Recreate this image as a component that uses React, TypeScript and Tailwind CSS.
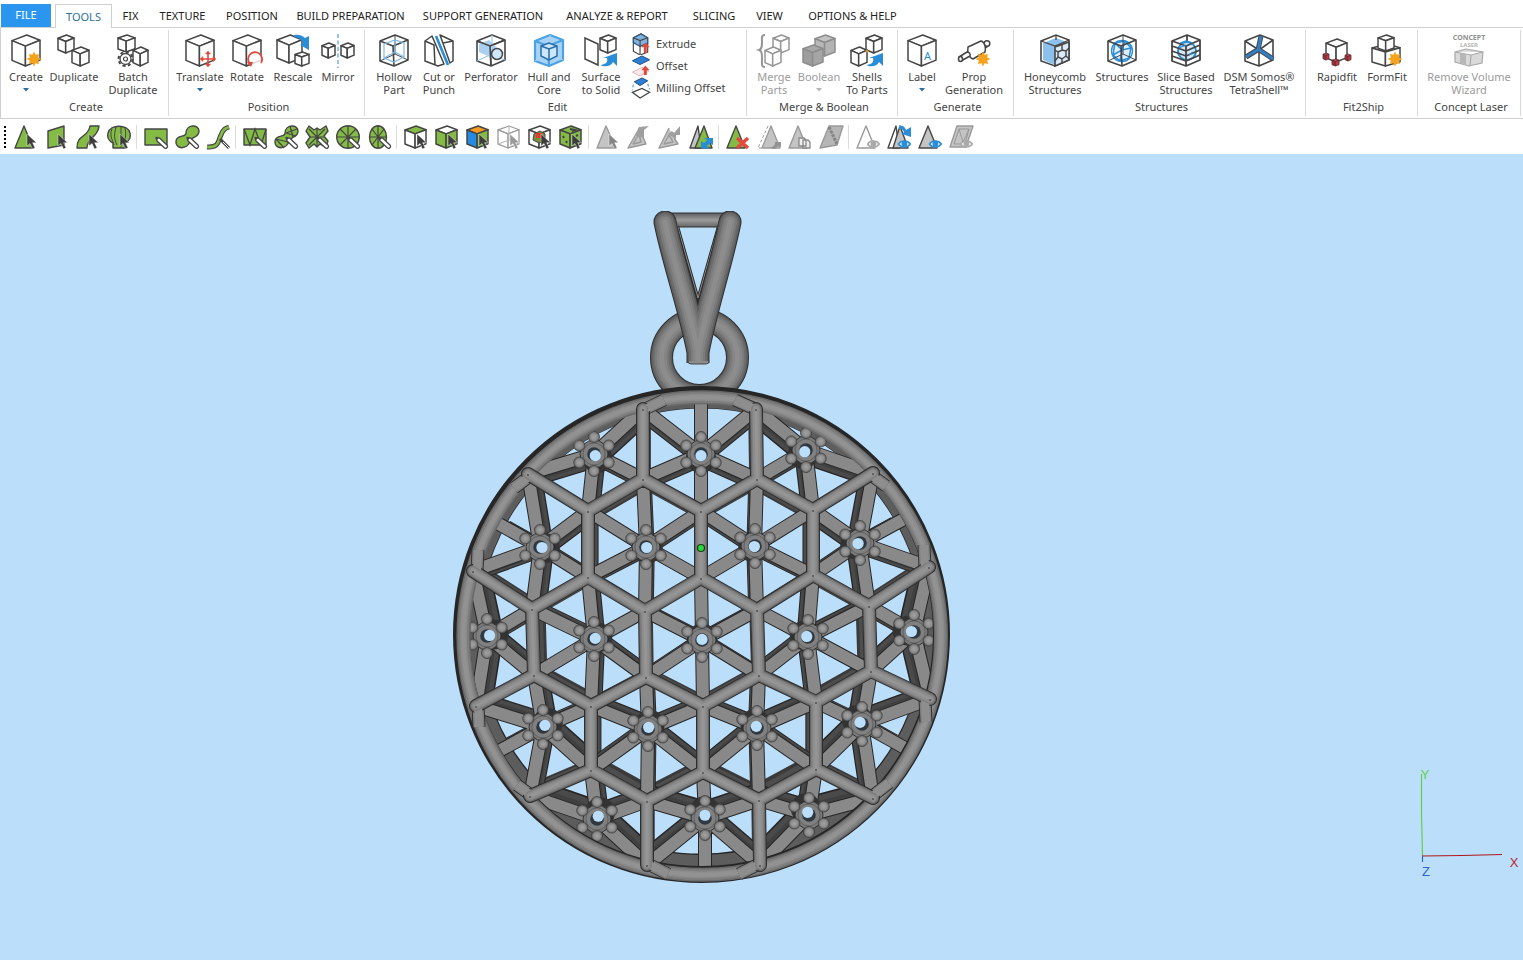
import { ReactNode, useState } from "react";

const INK = "#454545";
const GREEN = "#83bb45";
const BLUE = "#2a8dd8";
const GRAY = "#969696";
const SKY = "#bbdefa";

// ---------- shared icon parts ----------

interface CubeProps {
  x?: number;
  y?: number;
  w?: number;
  h?: number;
  top?: string;
  left?: string;
  right?: string;
  stroke?: string;
  sw?: number;
}

function Cube({ x = 3, y = 1, w = 28, h = 31, top = "#fff", left = "#fff", right = "#fff", stroke = INK, sw = 1.5 }: CubeProps) {
  const L = `${x},${y + h * 0.18}`;
  const T = `${x + w * 0.53},${y}`;
  const R = `${x + w},${y + h * 0.17}`;
  const F = `${x + w * 0.48},${y + h * 0.36}`;
  const LB = `${x},${y + h * 0.82}`;
  const FB = `${x + w * 0.48},${y + h}`;
  const RB = `${x + w},${y + h * 0.81}`;
  return (
    <g stroke={stroke} strokeWidth={sw} strokeLinejoin="round">
      <polygon points={`${L} ${T} ${R} ${F}`} fill={top} />
      <polygon points={`${L} ${F} ${FB} ${LB}`} fill={left} />
      <polygon points={`${F} ${R} ${RB} ${FB}`} fill={right} />
    </g>
  );
}

// Cube drawn as a see-through frame
function WireCube({ fill = "none", stroke = INK, sw = 1.6, inner = INK }: { fill?: string; stroke?: string; sw?: number; inner?: string }) {
  return (
    <g fill="none" stroke={stroke} strokeWidth={sw} strokeLinejoin="round">
      <path d="M3 7 18 1 31 6V26L17 32 3 27Z" fill={fill} />
      <path d="M3 7 16 12 31 6M16 12 17 32" />
      <path d="M18 1V20M18 20 3 27M18 20 31 26" stroke={inner} strokeWidth={1} />
    </g>
  );
}

function Star({ x, y }: { x: number; y: number }) {
  return (
    <path
      transform={`translate(${x} ${y})`}
      fill="#f5a31c"
      d="M0-7.500 1.600-4.200 5-5 4.200-1.600 7.500 0 4.200 1.600 5 5 1.600 4.200 0 7.500-1.600 4.200-5 5-4.200 1.600-7.500 0-4.200-1.600-5-5-1.600-4.200Z"
    />
  );
}

function Cursor({ color = "#3d3d3d" }: { color?: string }) {
  return <path d="M12 9.500V21.500L15 19 17.500 24.500 20 23.300 17.600 18.200H21.500Z" transform="translate(1 -.5)" fill={color} stroke="#fff" strokeWidth=".4" />;
}

function Pen() {
  return (
    <g>
      <path d="M12 12.500 13 16 20.500 23C22 24 24.500 22 23.200 20.300L15.800 13.200Z" fill="#fff" stroke={INK} strokeWidth="1.300" strokeLinejoin="round" />
      <path d="M12 12.500 12.800 15.200 14.800 13.200Z" fill={INK} />
    </g>
  );
}

function Eye({ color = BLUE }: { color?: string }) {
  return (
    <g fill="#fff" stroke={color} strokeWidth="1.500">
      <path d="M11.500 19C14 15 20.500 15 23.300 19 20.500 23 14 23 11.500 19Z" />
      <circle cx="17.400" cy="18.800" r="2.200" fill={color} />
    </g>
  );
}

function BlueArrow({ x = 0, y = 0 }: { x?: number; y?: number }) {
  return <path transform={`translate(${x} ${y})`} d="M0 12C5 11 7 9 6 5L2 5 16 0V13L12 9C10 13 6 14 1 13Z" fill={BLUE} />;
}

// ---------- ribbon icons (34 x 34) ----------

const bigIcons: Record<string, ReactNode> = {
  create: (
    <>
      <Cube />
      <Star x={25} y={25} />
    </>
  ),
  duplicate: (
    <>
      <Cube x={1} y={1} w={16} h={18} />
      <Cube x={15} y={13} w={17} h={19} />
    </>
  ),
  batch: (
    <>
      <Cube x={2} y={1} w={17} h={17} />
      <Cube x={17} y={13} w={15} h={19} />
      <circle cx="9.500" cy="25" r="7" fill="#fff" stroke={INK} strokeWidth="2" strokeDasharray="3 2.500" />
      <circle cx="9.500" cy="25" r="5.500" fill="#fff" stroke={INK} strokeWidth="1.300" />
      <circle cx="9.500" cy="25" r="2" fill="#fff" stroke={INK} strokeWidth="1.200" />
    </>
  ),
  translate: (
    <>
      <Cube />
      <g stroke="#e0483c" strokeWidth="1.600" fill="#e0483c">
        <path d="M25 18V32M18 25H32" />
        <path strokeWidth=".5" d="M25 17 27.500 20H22.500ZM25 33 27.500 30H22.500ZM17 25 20 22.500V27.500ZM33 25 30 22.500V27.500Z" />
      </g>
    </>
  ),
  rotate: (
    <>
      <Cube />
      <circle cx="25" cy="25" r="7" fill="#fff" fillOpacity=".8" />
      <path d="M31 29A7 7 0 1 0 20 30" fill="none" stroke="#e0483c" strokeWidth="1.800" />
      <path d="M17 28 23 28 21 33Z" fill="#e0483c" />
    </>
  ),
  rescale: (
    <>
      <Cube x={1} y={1} w={25} h={28} />
      <path d="M18 1C23 0 27 2 29 4L33 2V16L24 11 27 9C25 5 22 3 18 3Z" fill={BLUE} />
      <Cube x={19} y={18} w={14} h={14} />
    </>
  ),
  mirror: (
    <>
      <Cube x={1} y={9} w={13} h={15} />
      <Cube x={20} y={9} w={13} h={15} />
      <path d="M17 0V34" stroke="#5aa7dc" strokeWidth="1.300" strokeDasharray="4 2.500" />
    </>
  ),
  hollow: (
    <>
      <WireCube />
      <path d="M7 10 18 6 27 9V23L17 28 7 24ZM18 6V18L7 24M18 18 27 23" fill="none" stroke="#7fb9e4" strokeWidth="1.200" />
    </>
  ),
  cut: (
    <>
      <path d="M3 7 10 2 22 30 16 32 3 27ZM3 7 12 11 13 31" fill="#fff" stroke={INK} strokeWidth="1.500" strokeLinejoin="round" />
      <path d="M18 1 31 7V27L28 29Z" fill="#fff" stroke={INK} strokeWidth="1.500" strokeLinejoin="round" />
      <path d="M21 9 31 7" stroke={INK} strokeWidth="1.500" />
      <path d="M14 2 26 31" stroke={BLUE} strokeWidth="2.600" />
    </>
  ),
  perforator: (
    <>
      <WireCube inner="#8fc4ec" />
      <path d="M5 10 15 6 24 15 24 26 18 24 5 18Z" fill="#a9d0f1" />
      <path d="M3 7 16 12 31 6M16 12 17 32" fill="none" stroke={INK} strokeWidth="1.600" />
      <circle cx="23" cy="20" r="5.500" fill="#cfe5f8" stroke={INK} strokeWidth="1.500" />
    </>
  ),
  hull: (
    <>
      <WireCube fill="#a8d3f5" stroke="#4ba3e3" sw={2.2} inner="#a8d3f5" />
      <path d="M9 12 17 9 25 12V22L17 26 9 22Z" fill="#cce6fb" stroke="#286ea8" strokeWidth="1.500" />
      <path d="M9 12 17 15 25 12M17 15V26" fill="none" stroke="#286ea8" strokeWidth="1.500" />
    </>
  ),
  surface: (
    <>
      <path d="M1 4 14 10V31L1 25Z" fill="#fff" stroke={INK} strokeWidth="1.500" />
      <Cube x={16} y={1} w={16} h={18} />
      <BlueArrow x={17} y={19} />
    </>
  ),
  merge: (
    <>
      <path d="M8 1C4 1 5 4 5 8S5 15 2 16C5 17 5 20 5 25S4 33 8 33" fill="none" stroke={GRAY} strokeWidth="2" />
      <Cube x={16} y={1} w={16} h={18} stroke={GRAY} />
      <Cube x={8} y={13} w={16} h={19} stroke={GRAY} />
    </>
  ),
  boolean: (
    <>
      <Cube x={13} y={1} w={20} h={21} stroke="#8d8d8d" top="#c2c2c2" left="#b9b9b9" right="#b3b3b3" />
      <Cube x={1} y={11} w={20} h={21} stroke="#8d8d8d" top="#a8a8a8" left="#9d9d9d" right="#a5a5a5" />
    </>
  ),
  shells: (
    <>
      <Cube x={16} y={1} w={16} h={18} />
      <Cube x={1} y={13} w={16} h={19} />
      <circle cx="17" cy="17" r="1.300" fill="#e8952c" />
      <BlueArrow x={17} y={19} />
    </>
  ),
  label: (
    <>
      <Cube />
      <text x="19" y="26" fontSize="11" fill={BLUE} fontFamily="Noto Sans, sans-serif">
        A
      </text>
    </>
  ),
  prop: (
    <>
      <g fill="#fff" stroke={INK} strokeWidth="1.500" strokeLinejoin="round">
        <path d="M25 10 29 8 30 13 27 14" />
        <circle cx="30" cy="9.500" r="2.800" />
        <path d="M11 13 24 7C28 8 29 14 28 18L16 25C12 24 10 18 11 13Z" />
        <path d="M2 23 10 18A3 3 0 0 1 13 22L4 27Z" />
        <ellipse cx="3.500" cy="25" rx="2" ry="2.500" />
      </g>
      <Star x={26} y={25} />
    </>
  ),
  honeycomb: (
    <>
      <path d="M3 7 18 1 31 6V26L17 32 3 27Z" fill="#fff" stroke={INK} strokeWidth="1.600" />
      <path d="M5 9 18 4 29 8 17 13V31L5 26Z" fill="#8cc1ee" />
      <path d="M17 13 31 8V26L17 32Z" fill="#dcebf7" stroke={INK} strokeWidth="1.600" />
      <path d="M24 16 28 17 28 22 24 25 20 23V18ZM24 16V10M28 17 31 14M28 22 31 25M24 25V30M20 23 17 27M20 18 17 16" fill="none" stroke={INK} strokeWidth="1.400" />
      <path d="M3 7 17 12 31 6M18 1V6" fill="none" stroke={INK} strokeWidth="1.300" />
    </>
  ),
  structures: (
    <>
      <circle cx="17" cy="17" r="10.500" fill="#dff0fc" stroke={BLUE} strokeWidth="1.300" />
      <path d="M10 9 20 7 26 14 24 24 15 27 8 21ZM10 9 17 16 26 14M17 16 15 27M8 21 17 16 20 7" fill="none" stroke={BLUE} strokeWidth="1.500" />
      <WireCube />
    </>
  ),
  slice: (
    <>
      <circle cx="18" cy="17" r="9" fill="#d5eafa" stroke={BLUE} strokeWidth="2" />
      <g fill="none" stroke={INK} strokeWidth="1.800" strokeLinejoin="round">
        <path d="M3 7 18 1 31 6 17 12ZM3 7V27L17 32 31 26V6M17 12V32M18 1V7" />
        <path d="M3 12 17 17 31 11M3 17 17 22 31 16M3 22 17 27 31 21" />
      </g>
      <path d="M11 9 17 7 24 9M10 14 17 11M24 18 20 21" stroke={BLUE} strokeWidth="1.300" fill="none" />
    </>
  ),
  dsm: (
    <>
      <path d="M3 7 18 1 31 6V26L17 32 3 27ZM3 7 17 16 31 6M17 16V32" fill="none" stroke={INK} strokeWidth="1.600" strokeLinejoin="round" />
      <path d="M19 2 16 16M17 15 4 23M16 15 31 25" stroke={INK} strokeWidth="5" />
      <path d="M19 2 16 17M17 15 4 23M16 15 31 25" stroke="#347fc2" strokeWidth="3.200" />
    </>
  ),
  rapidfit: (
    <>
      <Cube x={6} y={5} w={21} h={23} />
      <g>
        <Cube x={3} y={19} w={6} h={7} top="#d7525a" left="#a6313a" right="#c13b45" stroke="#5b2a2d" sw={0.8} />
        <Cube x={25} y={20} w={6} h={7} top="#d7525a" left="#a6313a" right="#c13b45" stroke="#5b2a2d" sw={0.8} />
        <Cube x={12} y={25} w={7} h={7} top="#d7525a" left="#a6313a" right="#c13b45" stroke="#5b2a2d" sw={0.8} />
      </g>
    </>
  ),
  formfit: (
    <>
      <Cube x={2} y={10} w={28} h={22} />
      <Cube x={8} y={1} w={16} h={16} />
      <Star x={25} y={25} />
    </>
  ),
  concept: (
    <>
      <g fontFamily="Noto Sans, sans-serif" fontWeight="700" textAnchor="middle">
        <text x="17" y="6" fontSize="7" fill="#8f8f8f">
          CONCEPT
        </text>
        <text x="17" y="13" fontSize="6" fill="#b5b5b5">
          LASER
        </text>
      </g>
      <path d="M3 18 14 15 31 18 30 29 17 32 3 28ZM3 18 19 21 31 18M19 21 18 32" fill="#dadada" stroke="#a8a8a8" strokeWidth="1.200" />
      <path d="M8 19 14 20V31L8 29Z" fill="#b7b7b7" />
    </>
  ),
};

const smallIcons: Record<string, ReactNode> = {
  extrude: (
    <>
      <path d="M2 5 10 1 17 5V20L9 23 2 19Z" fill="#fff" stroke={INK} strokeWidth="1.200" />
      <path d="M2 5 10 1 17 5V11L9 14 2 10Z" fill="#7fb2de" stroke="#2b5279" strokeWidth="1.200" />
      <path d="M2 5 9 8 17 5M9 8V22" fill="none" stroke={INK} strokeWidth="1.200" />
      <path d="M13 21H16V15H19L14.500 10 10.500 15H13Z" fill="#e0483c" />
    </>
  ),
  offset: (
    <>
      <path d="M1 6 11 1 19 5 9 10Z" fill="#2c7fd3" stroke="#1c4b80" strokeWidth="1" />
      <path d="M1 18 11 13 18 17 9 22Z" fill="#fbe9ea" stroke="#dcb1b5" strokeWidth="1" />
      <path d="M13 21H16V16H19L14.500 11 10.500 16H13Z" fill="#e0483c" />
    </>
  ),
  milling: (
    <>
      <path d="M3 5 11 1 17 4 9 9Z" fill="#2c7fd3" stroke="#1c4b80" strokeWidth="1" />
      <path d="M1 16 11 12 19 16 9 22Z" fill="#fff" stroke={INK} strokeWidth="1.300" />
      <path d="M2 8 1 14M17 7 19 13" stroke="#6eb0e2" strokeWidth="1.500" strokeDasharray="3 2" />
    </>
  ),
};

// ---------- marking toolbar icons (24 x 24) ----------

const g = { fill: GREEN, stroke: INK, strokeWidth: 1.4, strokeLinejoin: "round" as const };
const d = { fill: "#c4c4c4", stroke: "#9a9a9a", strokeWidth: 1.4, strokeLinejoin: "round" as const };
const FAN = "M12 1V23M1 12H23M4 4 20 20M20 4 4 20";

const markIcons: Record<string, ReactNode> = {
  "Mark triangle": (
    <>
      <path {...g} d="M10 1 1 23H19Z" />
      <Cursor />
    </>
  ),
  "Mark plane": (
    <>
      <path {...g} d="M3 6 19 1V20L3 23Z" />
      <Cursor />
    </>
  ),
  "Mark surface": (
    <>
      <path {...g} d="M1 23C1 9 12 13 14 1H23C22 13 11 12 11 23Z" />
      <Cursor />
    </>
  ),
  "Mark shell": (
    <>
      <path {...g} d="M6 23H18V18C22 16 24 12 23 8 21-1 3-1 1 8 0 12 2 16 6 18Z" />
      <path d="M9 2C7 10 7 14 10 20M14 1V22M5 4C2 11 6 16 7 20M18 3C20 11 17 16 17 20" fill="none" stroke={INK} />
      <Cursor />
    </>
  ),
  "Rectangle selection": (
    <>
      <path {...g} d="M1 4H23V20H1Z" />
      <Pen />
    </>
  ),
  "Free form selection": (
    <>
      <path {...g} d="M11 8C11-1 24-1 24 6 24 13 17 11 15 16 13 25 0 25 1 16 2 9 11 13 11 8Z" />
      <Pen />
    </>
  ),
  "Brush selection": (
    <>
      <path d="M1 22C14 23 12 15 15 10 17 4 20 3 23 2" fill="none" stroke={INK} strokeWidth="5" />
      <path d="M1 22C14 23 12 15 15 10 17 4 20 3 23 2" fill="none" stroke={GREEN} strokeWidth="2.600" />
      <path d="M14 14 23 23" stroke={INK} strokeWidth="3" />
      <path d="M17 17 23 23" stroke="#fff" />
    </>
  ),
  "Window triangles": (
    <>
      <path {...g} d="M1 4H23V20H1Z" />
      <path d="M1 4 7 20 12 4 18 20 23 4" fill="none" stroke={INK} strokeWidth="1.300" />
      <Pen />
    </>
  ),
  "Free form triangles": (
    <>
      <path {...g} d="M11 8C11-1 24-1 24 6 24 13 17 11 15 16 13 25 0 25 1 16 2 9 11 13 11 8Z" />
      <path d="M12 8 23 4M12 8 22 11M2 14 14 17M2 14 10 23M16 1 19 12" stroke={INK} strokeWidth="1.200" />
      <Pen />
    </>
  ),
  "Star triangles": (
    <>
      <path {...g} d="M4 1 9 5 12 3 15 5 21 1 23 6 19 11 23 16 21 22 15 19 12 22 9 19 4 23 1 18 5 12 1 6Z" />
      <path d="M12 4V21M5 12H19M4 4 20 20M20 4 4 20" stroke={INK} strokeWidth="1.200" />
      <Pen />
    </>
  ),
  "Circle triangles": (
    <>
      <circle {...g} cx="12" cy="12" r="11.300" />
      <path d={FAN} stroke={INK} strokeWidth="1.200" />
      <Pen />
    </>
  ),
  "Ellipse triangles": (
    <>
      <ellipse {...g} cx="11" cy="12" rx="8.500" ry="11.300" />
      <path d="M11 1V23M3 12H19M5 4 17 20M17 4 5 20" stroke={INK} strokeWidth="1.200" />
      <Pen />
    </>
  ),
  "Top face": (
    <>
      <Cube x={1} y={1} w={21} h={22} top={GREEN} sw={1.5} />
      <Cursor />
    </>
  ),
  "Side faces": (
    <>
      <Cube x={1} y={1} w={21} h={22} left={GREEN} right={GREEN} sw={1.5} />
      <Cursor />
    </>
  ),
  "Color faces": (
    <>
      <Cube x={1} y={1} w={21} h={22} top="#f59a1d" left="#258be0" right={GREEN} sw={1.5} />
      <Cursor />
    </>
  ),
  "No faces": (
    <>
      <Cube x={1} y={1} w={21} h={22} stroke="#9a9a9a" sw={1.3} />
      <path d="M12 1V15L1 19M12 15 22 19" stroke="#b5b5b5" fill="none" />
      <Cursor color="#9a9a9a" />
    </>
  ),
  "Inner faces": (
    <>
      <Cube x={1} y={1} w={21} h={22} sw={1.5} />
      <path d="M6 9 12 6 17 9V16L11 18 5 15Z" fill="#7a8f3c" stroke={INK} />
      <path d="M8 8H14V13H8Z" fill="#e5382e" />
      <Cursor />
    </>
  ),
  "All faces": (
    <>
      <Cube x={1} y={1} w={21} h={22} top={GREEN} left={GREEN} right={GREEN} sw={1.5} />
      <path d="M11 4 16 5 13 6M4 11 5 13M7 16 8 18M17 11 19 10" stroke={INK} strokeWidth="2" fill="none" />
      <Cursor />
    </>
  ),
  "Select triangles": (
    <>
      <path {...d} d="M10 1 1 23H20Z" />
      <Cursor color="#858585" />
    </>
  ),
  "Shrink selection": (
    <>
      <path {...d} d="M13 2 1 23 19 19 16 12M12 9 6 19 14 17Z" />
      <path d="M9 11 12 2 22 1 17 5 17 13Z" fill="#9f9f9f" />
    </>
  ),
  "Grow selection": (
    <>
      <path {...d} d="M11 3 1 23 20 19 16 13M11 10 6 19 15 17Z" />
      <path d="M10 9 14 6 16 8 22 1V10L18 10 18 14Z" fill="#9f9f9f" />
    </>
  ),
  "Invert selection": (
    <>
      <path {...d} stroke={INK} d="M9 1 1 23H12Z" />
      <path {...g} d="M15 1 6 23H23Z" />
      <path d="M12 23V16L15 18 18 15 15 13H24V20L21 18 18 21 20 24Z" fill={BLUE} />
    </>
  ),
  "Unmark all": (
    <>
      <path {...g} d="M10 1 1 23H19Z" />
      <path d="M11 13 22 23M22 13 11 23" stroke="#e5483c" strokeWidth="3.500" />
    </>
  ),
  "Separate marked": (
    <>
      <path {...d} d="M14 1 5 23H23Z" />
      <path d="M11 1 1 23H7" fill="none" stroke="#999" strokeDasharray="3 2" />
      <path d="M13 23C18 21 18 19 18 17H24V22L21 21 18 24Z" fill="#929292" />
    </>
  ),
  "Copy marked": (
    <>
      <path {...d} d="M10 1 1 23H19Z" />
      <path d="M11 13H16L18 15V21H11ZM15 15H20L22 17V23H15Z" fill="#eee" stroke="#888" strokeWidth="1.300" />
    </>
  ),
  "Flip marked": (
    <>
      <path {...d} fill="#b5b5b5" d="M1 23 10 1H24L18 20Z" />
      <path d="M10 2 18 19" stroke="#858585" strokeWidth="3" strokeDasharray="3 1" />
    </>
  ),
  "Hide marked": (
    <>
      <path {...d} fill="#fff" d="M10 1 1 23H19Z" />
      <Eye color="#aaa" />
    </>
  ),
  "Invert visible": (
    <>
      <path {...d} fill="#fff" stroke={INK} d="M9 1 1 23H12Z" />
      <path {...d} stroke={INK} d="M13 1 6 23H21Z" />
      <path d="M12 1C17 0 18 3 19 5L24 2V12L15 9 17 7C16 4 14 4 12 4Z" fill={BLUE} />
      <Eye />
    </>
  ),
  "Show marked": (
    <>
      <path {...d} stroke={INK} d="M10 1 1 23H19Z" />
      <Eye />
    </>
  ),
  "Show all": (
    <>
      <path {...d} d="M8 1H24L17 22H1Z" />
      <path d="M10 4H20L16 19H5ZM10 4 14 17 20 4" stroke="#999" fill="none" />
      <Eye color="#aaa" />
    </>
  ),
};

const markGroups = [4, 3, 5, 6, 4, 4, 4];

// ---------- ribbon ----------

interface Tool {
  icon: string;
  lines: string[];
  width: string;
  arrow?: boolean;
  off?: boolean;
}

interface ToolGroup {
  name: string;
  pad: string;
  tools: Tool[];
}

const groups: ToolGroup[] = [
  {
    name: "Create",
    pad: "pl-[2px]",
    tools: [
      { icon: "create", lines: ["Create"], width: "w-12", arrow: true },
      { icon: "duplicate", lines: ["Duplicate"], width: "w-12" },
      { icon: "batch", lines: ["Batch", "Duplicate"], width: "w-[70px]" },
    ],
  },
  {
    name: "Position",
    pad: "pl-[7px] pr-1",
    tools: [
      { icon: "translate", lines: ["Translate"], width: "w-12", arrow: true },
      { icon: "rotate", lines: ["Rotate"], width: "w-[46px]" },
      { icon: "rescale", lines: ["Rescale"], width: "w-[46px]" },
      { icon: "mirror", lines: ["Mirror"], width: "w-11" },
    ],
  },
  {
    name: "Edit",
    pad: "pl-[7px]",
    tools: [
      { icon: "hollow", lines: ["Hollow", "Part"], width: "w-11" },
      { icon: "cut", lines: ["Cut or", "Punch"], width: "w-[46px]" },
      { icon: "perforator", lines: ["Perforator"], width: "w-[58px]" },
      { icon: "hull", lines: ["Hull and", "Core"], width: "w-[58px]" },
      { icon: "surface", lines: ["Surface", "to Solid"], width: "w-[46px]" },
    ],
  },
  {
    name: "Merge & Boolean",
    pad: "px-[5px]",
    tools: [
      { icon: "merge", lines: ["Merge", "Parts"], width: "w-11", off: true },
      { icon: "boolean", lines: ["Boolean"], width: "w-[46px]", arrow: true, off: true },
      { icon: "shells", lines: ["Shells", "To Parts"], width: "w-[50px]" },
    ],
  },
  {
    name: "Generate",
    pad: "pl-[2px] pr-[9px]",
    tools: [
      { icon: "label", lines: ["Label"], width: "w-11", arrow: true },
      { icon: "prop", lines: ["Prop", "Generation"], width: "w-[60px]" },
    ],
  },
  {
    name: "Structures",
    pad: "pl-[6px] pr-[5px]",
    tools: [
      { icon: "honeycomb", lines: ["Honeycomb", "Structures"], width: "w-[70px]" },
      { icon: "structures", lines: ["Structures"], width: "w-16" },
      { icon: "slice", lines: ["Slice Based", "Structures"], width: "w-16" },
      { icon: "dsm", lines: ["DSM Somos®", "TetraShell™"], width: "w-[82px]" },
    ],
  },
  {
    name: "Fit2Ship",
    pad: "pl-[6px] pr-[5px]",
    tools: [
      { icon: "rapidfit", lines: ["Rapidfit"], width: "w-[50px]" },
      { icon: "formfit", lines: ["FormFit"], width: "w-[50px]" },
    ],
  },
  {
    name: "Concept Laser",
    pad: "px-1",
    tools: [{ icon: "concept", lines: ["Remove Volume", "Wizard"], width: "w-[94px]", off: true }],
  },
];

const tabs = [
  { name: "TOOLS", width: "w-[57px]" },
  { name: "FIX", width: "w-[37px]" },
  { name: "TEXTURE", width: "w-[67px]" },
  { name: "POSITION", width: "w-[72px]" },
  { name: "BUILD PREPARATION", width: "w-[125px]" },
  { name: "SUPPORT GENERATION", width: "w-[140px]" },
  { name: "ANALYZE & REPORT", width: "w-[128px]" },
  { name: "SLICING", width: "w-[66px]" },
  { name: "VIEW", width: "w-[45px]" },
  { name: "OPTIONS & HELP", width: "w-[121px]" },
];

function ToolButton({ tool }: { tool: Tool }) {
  return (
    <button
      disabled={tool.off}
      className={`flex shrink-0 flex-col items-center whitespace-nowrap leading-[13px] ${tool.width} ${
        tool.off ? "text-[#9b9b9b]" : "text-[#444]"
      }`}
    >
      <svg viewBox="0 0 34 34" className="mb-[2px] size-[34px] shrink-0 overflow-visible">
        {bigIcons[tool.icon]}
      </svg>
      {tool.lines.map(line => (
        <span key={line}>{line}</span>
      ))}
      {tool.arrow && (
        <svg viewBox="0 0 6 4" className="mt-[5px] h-1 w-[6px]">
          <path d="M0 0H6L3 3.500Z" fill={tool.off ? "#b5b5b5" : "#2a6f9f"} />
        </svg>
      )}
    </button>
  );
}

function Ribbon() {
  return (
    <div className="flex h-[91px] border-b border-l border-[#d0d0d0] pt-[2px] text-[11px]">
      {groups.map((group, i) => (
        <section
          key={group.name}
          aria-label={group.name}
          className={`flex shrink-0 flex-col justify-between border-r border-[#dadada] pt-1 pb-px ${i === 0 ? "-ml-px" : ""} mb-[2px]`}
        >
          <div className={`flex items-start ${group.pad}`}>
            {group.tools.map(tool => (
              <ToolButton key={tool.icon} tool={tool} />
            ))}
            {group.name === "Edit" && (
              <div className="-mt-px flex w-[122px] flex-col pl-[6px]">
                {[
                  ["extrude", "Extrude"],
                  ["offset", "Offset"],
                  ["milling", "Milling Offset"],
                ].map(([icon, text]) => (
                  <button key={icon} className="flex h-[22px] items-center gap-1 whitespace-nowrap text-[#444]">
                    <svg viewBox="0 0 20 23" className="h-[22px] w-[22px]">
                      {smallIcons[icon]}
                    </svg>
                    {text}
                  </button>
                ))}
              </div>
            )}
          </div>
          <h2 className="pl-1 text-center leading-4 text-[#444]">{group.name}</h2>
        </section>
      ))}
    </div>
  );
}

function MarkBar() {
  const names = Object.keys(markIcons);
  let start = 0;
  return (
    <div className="flex h-[35px] items-center bg-white pl-1">
      <div className="mr-1 h-[22px] border-l-2 border-dotted border-black" />
      {markGroups.map((count, i) => {
        const part = names.slice(start, start + count);
        start += count;
        return (
          <div key={i} className={`flex items-center ${i > 0 ? "ml-[2px] border-l border-[#dcdcdc] pl-[3px]" : ""}`}>
            {part.map(name => (
              <button key={name} aria-label={name} className="flex w-[31px] justify-center">
                <svg viewBox="0 0 24 24" className="size-6 overflow-visible">
                  {markIcons[name]}
                </svg>
              </button>
            ))}
          </div>
        );
      })}
    </div>
  );
}

// ---------- pendant model ----------

type Point = [number, number];

const nodes: Record<string, Point> = {
  a1: [643, 409], a2: [756, 409],
  b1: [643, 479], b2: [757, 479],
  c0: [528, 474], c1: [588, 511], c2: [701, 511], c3: [813, 510], c4: [873, 473],
  d1: [588, 577], d2: [701, 578], d3: [813, 575],
  e0: [473, 571], e1: [532, 609], e2: [645, 611], e3: [757, 610], e4: [869, 606], e5: [929, 567],
  f1: [534, 675], f2: [646, 677], f3: [759, 675], f4: [871, 671],
  g0: [476, 706], g1: [591, 706], g2: [703, 706], g3: [816, 702], g5: [930, 699],
  h1: [591, 770], h2: [703, 772], h3: [816, 769],
  i0: [530, 796], i2: [647, 801], i3: [759, 800], i4: [873, 798],
  j2: [647, 865], j3: [760, 865],
};

const tubes =
  "a1b1 a2b2 b1c1 b1c2 b2c2 b2c3 c0c1 c3c4 c1d1 c2d2 c3d3 d1e1 d1e2 d2e2 d2e3 d3e3 d3e4 e0e1 e4e5 e1f1 e2f2 e3f3 e4f4 f1g0 f1g1 f2g1 f2g2 f3g2 f3g3 f4g3 f4g5 g1h1 g2h2 g3h3 h1i0 h1i2 h2i2 h2i3 h3i3 h3i4 i2j2 i3j3"
    .split(" ")
    .map((t): [Point, Point] => [nodes[t.slice(0, 2)], nodes[t.slice(2)]]);

// short tube ends that run into the rim
const stubs: [Point, Point][] = [
  [[645, 409], [664, 400]],
  [[755, 409], [735, 400]],
  [[530, 476], [514, 488]],
  [[871, 475], [886, 486]],
  [[477, 571], [478, 550]],
  [[925, 567], [924, 545]],
  [[478, 706], [479, 727]],
  [[925, 699], [926, 722]],
  [[532, 796], [517, 785]],
  [[870, 798], [889, 783]],
  [[650, 865], [668, 874]],
  [[757, 865], [739, 874]],
];

const flowers: Point[] = [
  [594, 454], [701, 454], [806, 450],
  [540, 547], [646, 547], [755, 546], [860, 543],
  [487, 636], [594, 639], [702, 640], [808, 637], [914, 632],
  [543, 727], [648, 729], [757, 728], [862, 724],
  [597, 819], [705, 818], [809, 815],
];

const rimPoints: Point[] = [
  [701, 402], [497, 523], [904, 519], [499, 751], [905, 748], [705, 868],
];

const spokes: [Point, Point][] = flowers.flatMap(f =>
  [...Object.values(nodes), ...rimPoints]
    .filter(n => Math.hypot(n[0] - f[0], n[1] - f[1]) < 80)
    .map((n): [Point, Point] => [f, n]),
);

// dark to light layers that make a stroke look round
const shade: [string, number][] = [
  ["#303030", 23],
  ["#5c5c5c", 21],
  ["#6c6c6c", 18],
  ["#7a7a7a", 14],
  ["#858585", 10],
  ["#8d8d8d", 5],
];

// deeper geometry moves towards the middle of the view
const sink = ([x, y]: Point, k: number): Point => [x + (701 - x) * k, y + (590 - y) * k];

function Lines({ list, color, width, depth = 0, cap = "butt" }: { list: [Point, Point][]; color: string; width: number; depth?: number; cap?: "butt" | "round" }) {
  const path = list
    .map(([a, b]) => {
      const p = sink(a, depth);
      const q = sink(b, depth);
      return `M${p[0]} ${p[1]}L${q[0]} ${q[1]}`;
    })
    .join("");
  return <path d={path} stroke={color} strokeWidth={width} strokeLinecap={cap} fill="none" />;
}

function Flower({ at: [x, y] }: { at: Point }) {
  const [hx, hy] = sink([x, y], 0.012);
  return (
    <g>
      <circle cx={sink([x, y], 0.03)[0]} cy={sink([x, y], 0.03)[1]} r="15" fill="#333" />
      <circle cx={x} cy={y} r="14" fill="#7a7a7a" stroke="#222" strokeWidth=".8" />
      <circle cx={x} cy={y} r="11" fill="#808080" stroke="#5a5a5a" strokeWidth=".8" />
      <circle cx={x} cy={y} r="6.800" fill="#303940" />
      <circle cx={hx} cy={hy} r="5.600" fill={SKY} />
      {[0, 1, 2, 3, 4, 5].map(i => {
        const a = ((30 + i * 60) * Math.PI) / 180;
        return <circle key={i} cx={x + Math.cos(a) * 17} cy={y + Math.sin(a) * 17} r="5.600" fill="url(#ball)" stroke="#383838" strokeWidth=".6" />;
      })}
    </g>
  );
}

function Viewport() {
  return (
    <svg viewBox="0 154 1523 806" className="min-h-0 w-full flex-1" role="img" aria-label="Pendant model">
      <defs>
        <radialGradient id="ball">
          <stop offset="0" stopColor="#a2a2a2" />
          <stop offset=".6" stopColor="#8e8e8e" />
          <stop offset="1" stopColor="#5c5c5c" />
        </radialGradient>
        <linearGradient id="bar" x1="0" x2="0" y1="0" y2="1">
          <stop offset="0" stopColor="#5c5c5c" />
          <stop offset=".5" stopColor="#9b9b9b" />
          <stop offset="1" stopColor="#666" />
        </linearGradient>
        <clipPath id="disc">
          <circle cx="701.500" cy="634.500" r="240" />
        </clipPath>
        <clipPath id="bail">
          <path d="M640 211H760V363H640Z" />
        </clipPath>
      </defs>

      {/* loop and bail */}
      <g fill="none">
        {shade.map(([color, width]) => (
          <circle key={color} cx="699.500" cy="357.500" r="38" stroke={color} strokeWidth={width} />
        ))}
      </g>
      <path d="M665 213H729V227H665Z" fill="url(#bar)" stroke="#333" strokeWidth="1" />
      <path d="M677 226 698 300 719 226" fill="none" stroke="#2c2c2c" strokeWidth="4" />
      <path d="M677 224 698 298 719 224" fill="none" stroke="#8a8a8a" strokeWidth="1" />
      <g fill="none" strokeLinecap="round" clipPath="url(#bail)">
        {shade.map(([color, width]) => (
          <path
            key={color}
            d="M665 222C673 262 690 310 698 352V375M730 222C722 262 706 310 698 352"
            stroke={color}
            strokeWidth={width}
          />
        ))}
      </g>
      <path d="M688 361Q688 364 691 364H706Q709 364 709 361" fill="#8c8c8c" stroke="#444" strokeWidth="1" />

      {/* inner wall and lattice */}
      <g clipPath="url(#disc)">
        <circle cx="701.500" cy="631" r="229" fill="none" stroke="#262626" strokeWidth="13" />
        <circle cx="701.500" cy="631.500" r="231" fill="none" stroke="#5d5d5d" strokeWidth="15" />
        <Lines list={tubes} color="#3a3a3a" width={10} depth={0.05} />
        <Lines list={tubes} color="#4d4d4d" width={11} depth={0.03} />
        <Lines list={spokes} color="#262626" width={12} depth={0.05} />
        <Lines list={spokes} color="#4a4a4a" width={11} depth={0.045} />
        <Lines list={spokes} color="#404040" width={12} depth={0.02} />
        <Lines list={spokes} color="#262626" width={14} />
        <Lines list={spokes} color="#898989" width={12} />
      </g>
      {flowers.map(f => (
        <Flower key={f.join()} at={f} />
      ))}

      {/* rim, the light layers sit lower right so the upper left edge stays dark */}
      <g fill="none">
        <circle cx="701.500" cy="634.500" r="240" stroke="#262626" strokeWidth="17" />
        <circle cx="702.200" cy="636" r="238.800" stroke="#696969" strokeWidth="14" />
        <circle cx="702.200" cy="636" r="238.800" stroke="#7d7d7d" strokeWidth="11" />
        <circle cx="702.200" cy="636" r="238.800" stroke="#8b8b8b" strokeWidth="7" />
        <circle cx="702.200" cy="636" r="238.800" stroke="#929292" strokeWidth="4" />
      </g>
      <Lines list={stubs} color="#303030" width={13} />
      <Lines list={stubs} color="#808080" width={11} />
      <Lines list={tubes} color="#2e2e2e" width={14} cap="round" />
      <Lines list={tubes} color="#666" width={12} cap="round" />
      <Lines list={stubs} color="#8e8e8e" width={8} />
      <Lines list={tubes} color="#7e7e7e" width={10} cap="round" />
      <Lines list={tubes} color="#8d8d8d" width={7} cap="round" />
      <Lines list={tubes} color="#959595" width={3} cap="round" />
      {Object.values(nodes).map(([x, y]) => (
        <circle key={`${x},${y}`} cx={x} cy={y + 1} r=".8" fill="#222" />
      ))}
      <circle cx="701" cy="548" r="3.500" fill="#2fd83a" stroke="#123f16" strokeWidth="1.200" />

      {/* axes */}
      <g fill="none" strokeWidth="1.200">
        <path d="M1421.500 774V814L1422.500 856" stroke="#62cf4c" />
        <path d="M1422 856 1462 855.500 1502 854.500" stroke="#b01818" />
        <path d="M1422.500 856V862" stroke="#2f66c4" />
      </g>
      <g fontFamily="Liberation Sans, Arial, sans-serif" fontSize="13" textAnchor="middle">
        <text x="1425" y="779" fill="#62cf4c">
          Y
        </text>
        <text x="1514" y="867" fill="#c01f2e">
          X
        </text>
        <text x="1426" y="876" fill="#2f66c4">
          Z
        </text>
      </g>
    </svg>
  );
}

export default function App() {
  const [active, setActive] = useState("TOOLS");

  return (
    <div className="flex h-screen flex-col overflow-hidden bg-[#bbdefa] font-['Noto_Sans',sans-serif]">
      <header className="shrink-0 bg-white">
        <nav className="flex h-7 items-end border-b border-[#d0d0d0] pl-px pt-1 text-[11px]">
          <button className="mr-1 h-[23px] w-[50px] bg-[#2b96ef] text-white">FILE</button>
          {tabs.map(tab => (
            <button
              key={tab.name}
              onClick={() => setActive(tab.name)}
              className={`shrink-0 whitespace-nowrap pt-px ${tab.width} ${
                active === tab.name ? "-mb-px h-6 border border-b-0 border-[#d0d0d0] bg-white text-[#2a7096]" : "h-[22px] text-[#222]"
              }`}
            >
              {tab.name}
            </button>
          ))}
        </nav>
        <Ribbon />
        <MarkBar />
      </header>
      <main className="flex min-h-0 flex-1">
        <Viewport />
      </main>
    </div>
  );
}
